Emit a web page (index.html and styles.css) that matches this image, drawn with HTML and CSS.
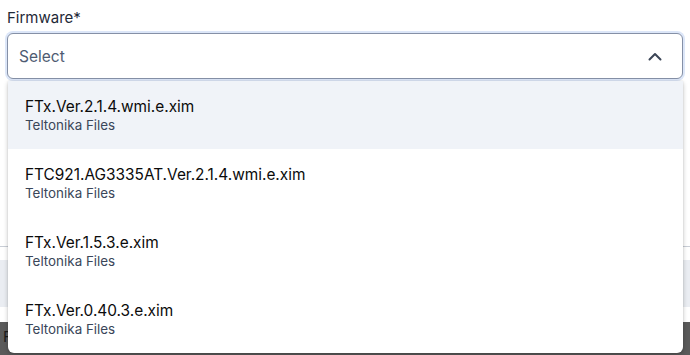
FILE: index.html
```html
<!DOCTYPE html>
<html>
<head>
<meta charset="utf-8">
<link rel="stylesheet" href="styles.css">
</head>
<body>
<div class="page">
  <div class="field">
    <label class="label">Firmware*</label>
    <div class="select">
      <span class="placeholder">Select</span>
      <svg class="chevron" width="14" height="9" viewBox="0 0 14 9"><path d="M1.5 7.5 L7 2 L12.5 7.5" fill="none" stroke="#3b4556" stroke-width="2" stroke-linecap="round" stroke-linejoin="round"/></svg>
    </div>
  </div>
  <div class="behind">
    <div class="divider"></div>
    <div class="graybox"></div>
    <div class="footer"><span class="footer-text">F</span></div>
  </div>
  <ul class="menu">
    <li class="option active"><div class="title">FTx.Ver.2.1.4.wmi.e.xim</div><div class="sub">Teltonika Files</div></li>
    <li class="option"><div class="title">FTC921.AG3335AT.Ver.2.1.4.wmi.e.xim</div><div class="sub">Teltonika Files</div></li>
    <li class="option"><div class="title">FTx.Ver.1.5.3.e.xim</div><div class="sub">Teltonika Files</div></li>
    <li class="option"><div class="title">FTx.Ver.0.40.3.e.xim</div><div class="sub">Teltonika Files</div></li>
  </ul>
</div>
</body>
</html>
```

FILE: styles.css
```css
* { box-sizing: border-box; }
html, body { margin: 0; padding: 0; background: #fff; }
body { font-family: Inter, "Noto Sans", sans-serif; color: #111827; }
.page { position: relative; width: 690px; height: 355px; overflow: hidden; }
.field { padding: 8px 7px 0 7px; }
.label { display: block; font-size: 15px; line-height: 19px; color: #1f2937; margin-bottom: 6px; }
.select {
  height: 46px;
  border: 1px solid #8590a6;
  border-radius: 6px;
  box-shadow: 0 0 0 2px #dce6f8;
  display: flex;
  align-items: center;
  justify-content: space-between;
  padding: 0 20px 0 11px;
  background: #fff;
}
.placeholder { font-size: 15.5px; color: #4e5b72; }
.chevron { display: block; }
.behind { padding-top: 167px; }
.divider { height: 1px; background: #c9ced6; }
.graybox { margin-top: 13px; height: 47px; background: #eaedf2; }
.footer { margin-top: 15px; height: 40px; background: #5a5a5a; padding: 4px 0 0 3px; }
.footer-text { font-size: 15px; color: #1a1a1a; }
.menu {
  position: absolute;
  top: 81px;
  left: 8px;
  width: 675px;
  margin: 0;
  padding: 0;
  list-style: none;
  background: #fff;
  border-radius: 0 0 6px 6px;
  box-shadow: 0 2px 5px rgba(0,0,0,0.22), 0 0 2px rgba(0,0,0,0.12);
  overflow: hidden;
}
.option { height: 68px; padding: 17px 17px 0 17px; }
.option.active { background: #f0f3f8; }
.title { font-size: 15.4px; line-height: 18px; color: #0b0b0b; }
.sub { font-size: 13.4px; line-height: 19px; color: #3a4659; }
```
